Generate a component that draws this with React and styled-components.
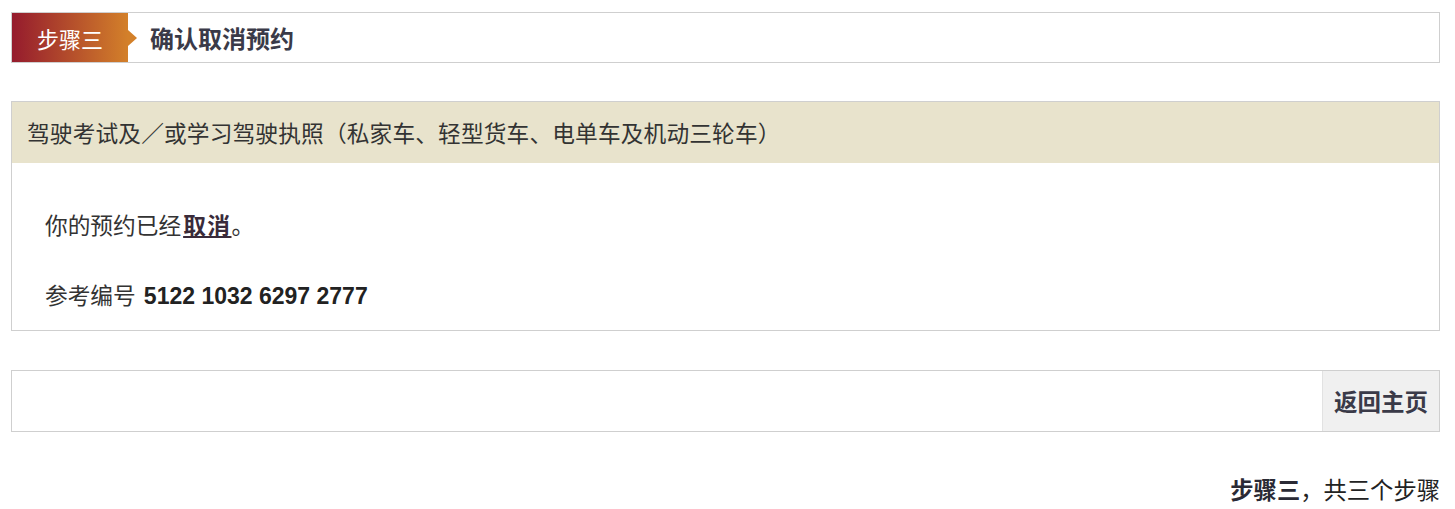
import React from "react";
import styled, { createGlobalStyle } from "styled-components";

const Global = createGlobalStyle`
  html, body { margin: 0; padding: 0; background: #fff; }
  body {
    font-family: "Noto Sans CJK SC", "Liberation Sans", sans-serif;
    color: #333;
  }
`;

const Page = styled.div`
  padding: 12px 15px 0 11px;
  display: flex;
  flex-direction: column;
`;

const StepBar = styled.div`
  display: flex;
  align-items: center;
  height: 49px;
  border: 1px solid #cfcfcf;
  background: #fff;
`;

const StepLabel = styled.div`
  position: relative;
  align-self: stretch;
  width: 116px;
  display: flex;
  align-items: center;
  justify-content: center;
  background: linear-gradient(to right, #951b2d, #d3802a);
  color: #fff;
  font-size: 22px;
  &::after {
    content: "";
    position: absolute;
    right: -9px;
    top: 50%;
    margin-top: -8px;
    border-top: 8px solid transparent;
    border-bottom: 8px solid transparent;
    border-left: 9px solid #d3802a;
  }
`;

const StepTitle = styled.div`
  margin-left: 22px;
  font-size: 24px;
  font-weight: bold;
  color: #3a3a48;
`;

const Panel = styled.div`
  margin-top: 38px;
  border: 1px solid #cfcfcf;
`;

const PanelHeader = styled.div`
  background: #e8e3cc;
  height: 61px;
  display: flex;
  align-items: center;
  padding-left: 15px;
  font-size: 22.7px;
  letter-spacing: 0.15px;
  color: #333;
`;

const PanelBody = styled.div`
  padding: 46px 33px 18px;
  display: flex;
  flex-direction: column;
  gap: 38px;
`;

const Line = styled.div`
  font-size: 22.7px;
  line-height: 32px;
  color: #333;
`;

const CancelLink = styled.a`
  font-weight: bold;
  color: #3a2b3a;
  text-decoration: underline;
  letter-spacing: 1.5px;
  margin-left: 2px;
  cursor: pointer;
`;

const RefNo = styled.span`
  margin-left: 3px;
  font-family: "Liberation Sans", Arial, sans-serif;
  font-size: 23px;
  font-weight: bold;
  color: #222;
`;

const ActionBar = styled.div`
  margin-top: 39px;
  height: 60px;
  border: 1px solid #cfcfcf;
  display: flex;
  justify-content: flex-end;
`;

const HomeButton = styled.button`
  width: 117px;
  border: none;
  border-left: 1px solid #e2e2e2;
  background: #f0f0f0;
  font-family: "Noto Sans CJK SC", sans-serif;
  font-size: 23.5px;
  font-weight: bold;
  color: #3a3a48;
  padding: 0;
  cursor: pointer;
`;

const Footer = styled.div`
  margin-top: 40px;
  text-align: right;
  font-size: 23.3px;
  color: #222;
  b { font-weight: bold; color: #2a2a35; }
`;

export default function App() {
  return (
    <>
      <Global />
      <Page>
        <StepBar>
          <StepLabel>步骤三</StepLabel>
          <StepTitle>确认取消预约</StepTitle>
        </StepBar>
        <Panel>
          <PanelHeader>
            驾驶考试及／或学习驾驶执照（私家车、轻型货车、电单车及机动三轮车）
          </PanelHeader>
          <PanelBody>
            <Line>
              你的预约已经<CancelLink>取消</CancelLink>。
            </Line>
            <Line>
              参考编号 <RefNo>5122 1032 6297 2777</RefNo>
            </Line>
          </PanelBody>
        </Panel>
        <ActionBar>
          <HomeButton>返回主页</HomeButton>
        </ActionBar>
        <Footer>
          <b>步骤三</b>，共三个步骤
        </Footer>
      </Page>
    </>
  );
}
